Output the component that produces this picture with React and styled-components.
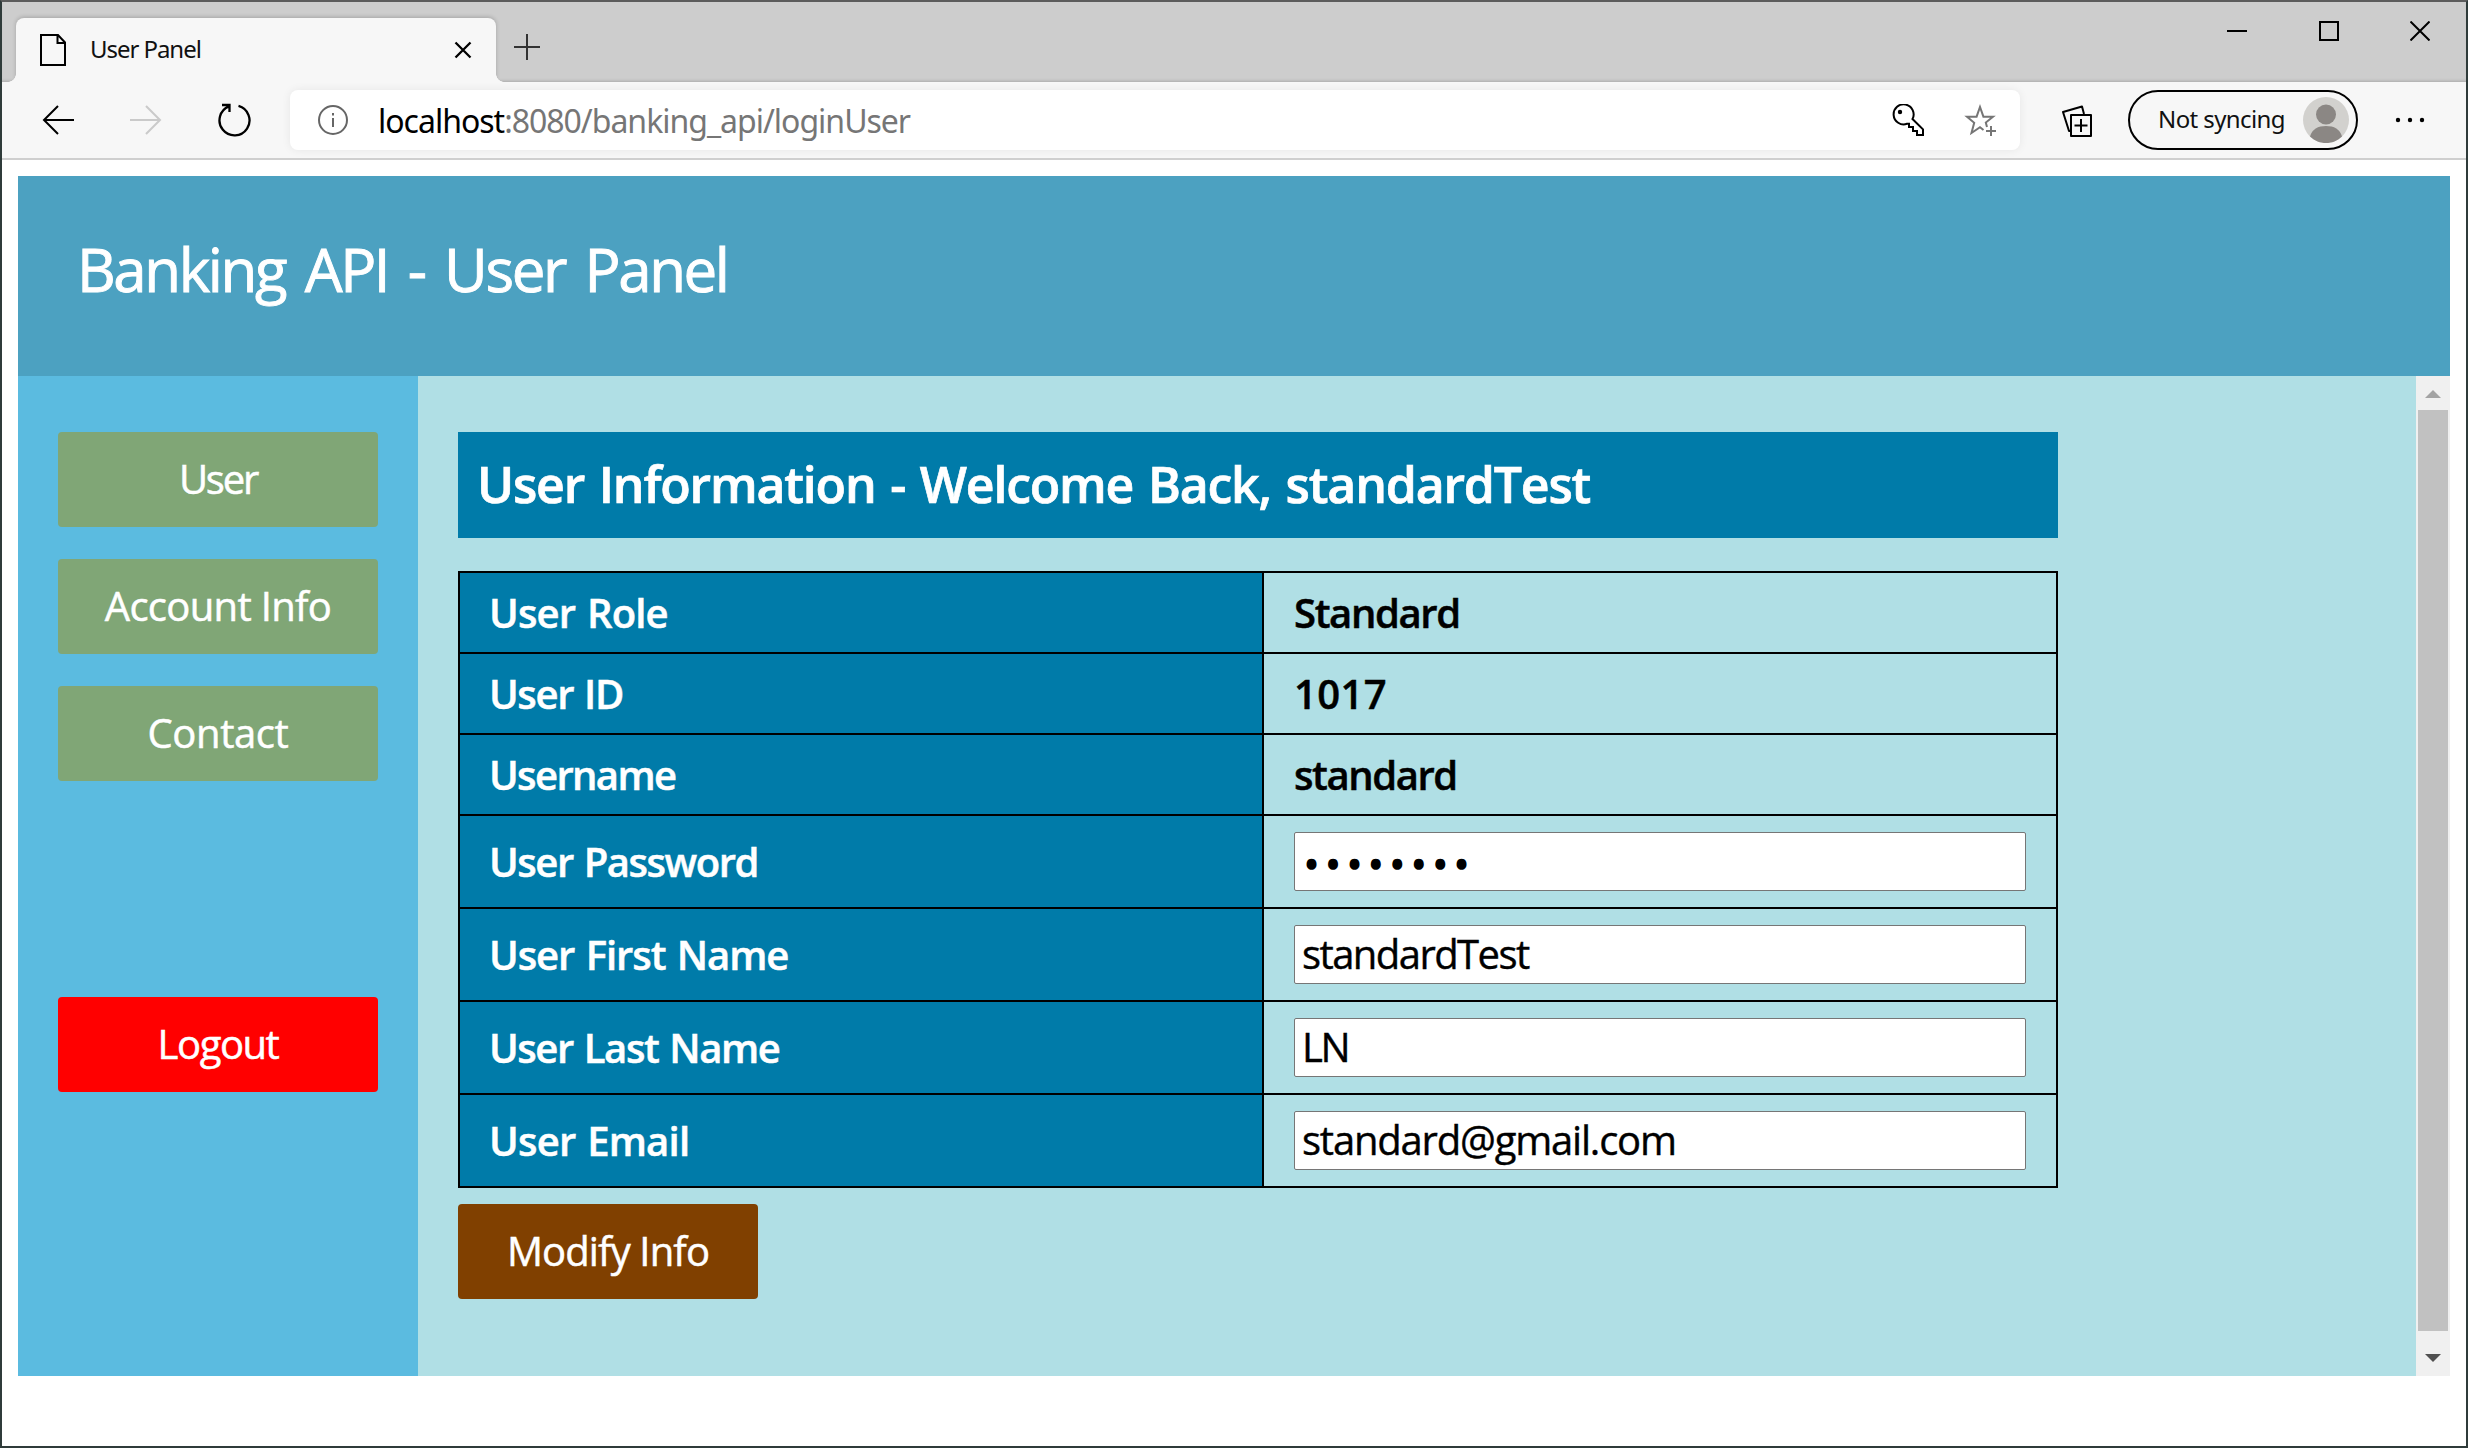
import React from 'react';
import styled, { createGlobalStyle } from 'styled-components';

const uiFont = '"Noto Sans", "Open Sans", sans-serif';
const pageFont = '"Open Sans", "Noto Sans", sans-serif';

const GlobalStyle = createGlobalStyle`
  *, *::before, *::after { box-sizing: border-box; }
  body { margin: 0; background: #fff; }
`;

const Window = styled.div`
  display: flex;
  flex-direction: column;
  width: 2468px;
  height: 1448px;
  border: 2px solid #2f3b3a;
  border-top-color: #5c5c5c;
  background: #fff;
  font-family: ${uiFont};
  overflow: hidden;
`;

const TabStrip = styled.div`
  display: flex;
  align-items: flex-start;
  height: 80px;
  flex: none;
  padding: 16px 36px 0 14px;
  background: #cdcdcd;
  box-shadow: inset 0 -3px 3px -2px #aaa;
`;

const Tab = styled.div`
  position: relative;
  display: flex;
  align-items: center;
  width: 480px;
  height: 64px;
  padding: 0 24px;
  background: #f7f7f7;
  border-radius: 8px 8px 0 0;
  box-shadow: 0 -1px 4px rgba(0, 0, 0, 0.2);
  clip-path: inset(-6px -8px 0 -14px);

  &::before, &::after {
    content: '';
    position: absolute;
    bottom: 0;
    width: 8px;
    height: 8px;
  }
  &::before {
    left: -8px;
    background: radial-gradient(circle at 0 0, transparent 7.5px, #f7f7f7 8px);
  }
  &::after {
    right: -8px;
    background: radial-gradient(circle at 100% 0, transparent 7.5px, #f7f7f7 8px);
  }
`;

const TabTitle = styled.span`
  flex: 1;
  margin-left: 24px;
  padding-bottom: 2px;
  color: #111;
  font-size: 24px;
  line-height: 32px;
  letter-spacing: -1.05px;
`;

const Icon = styled.svg`
  display: block;
  flex: none;
  fill: none;
  stroke: ${(p) => p.$color || '#000'};
  stroke-width: ${(p) => p.$stroke || 2};
`;

const NewTab = styled.div`
  margin: 16px 0 0 18px;
`;

const WindowControls = styled.div`
  display: flex;
  gap: 71.5px;
  margin: 3px 0 0 auto;
`;

const Toolbar = styled.div`
  display: flex;
  align-items: center;
  height: 78px;
  flex: none;
  padding: 0 40px 0 40px;
  background: #f7f7f7;
  border-bottom: 2px solid #cfcfcf;
`;

const NavButtons = styled.div`
  display: flex;
  align-items: center;
  width: 248px;
  gap: 56px;
`;

const AddressBar = styled.div`
  display: flex;
  align-items: center;
  width: 1730px;
  height: 60px;
  padding: 0 24px 0 28px;
  background: #fff;
  border-radius: 8px;
  box-shadow: 0 0 10px rgba(0, 0, 0, 0.07);
`;

const Url = styled.span`
  flex: 1;
  margin-left: 30px;
  padding-top: 1px;
  color: #767676;
  font-size: 32px;
  line-height: 44px;
  letter-spacing: -1.01px;
`;

const UrlHost = styled.span`
  color: #000;
`;

const AddressActions = styled.div`
  display: flex;
  gap: 40px;
`;

const Collections = styled.div`
  margin: 2px 36px 0 42px;
`;

const Profile = styled.div`
  display: flex;
  align-items: center;
  justify-content: space-between;
  width: 230px;
  height: 60px;
  padding: 0 7px 0 28px;
  border: 2px solid #000;
  border-radius: 30px;
`;

const ProfileLabel = styled.span`
  padding-bottom: 3px;
  color: #111;
  font-size: 24px;
  line-height: 32px;
  letter-spacing: -0.6px;
  white-space: nowrap;
`;

const More = styled.div`
  margin-left: 36px;
`;

const Page = styled.div`
  width: 2432px;
  margin: 16px 0 0 16px;
  font-family: ${pageFont};
`;

const Banner = styled.header`
  height: 200px;
  padding: 53px 59px 0;
  background: #4ca1c1;
  color: #fff;
`;

const BannerTitle = styled.h1`
  margin: 0;
  font-size: 60px;
  font-weight: 400;
  line-height: 81px;
  letter-spacing: -2.4px;
  word-spacing: 6.3px;
  -webkit-text-stroke: 0.9px currentColor;
`;

const Body = styled.div`
  display: flex;
  height: 1000px;
`;

const Sidebar = styled.nav`
  display: flex;
  flex-direction: column;
  gap: 32px;
  width: 400px;
  padding: 56px 40px 0;
  background: #5bbbe0;
`;

const Button = styled.button`
  width: ${(p) => p.$width || 320}px;
  height: 95px;
  margin: ${(p) => p.$top || 0}px 0 0;
  padding: 0 0 2px;
  border: 0;
  border-radius: 4px;
  background: ${(p) => p.$bg || '#80a676'};
  color: #fff;
  font-family: inherit;
  font-size: 40px;
  letter-spacing: ${(p) => p.$track || 0}px;
  -webkit-text-stroke: 0.5px currentColor;
`;

const Main = styled.main`
  flex: 1;
  padding: 56px 40px 0;
  background: #b0dfe5;
`;

const Heading = styled.h2`
  width: 1600px;
  height: 106px;
  margin: 0 0 33px;
  padding: 1px 0 0 19px;
  background: #007ba9;
  color: #fff;
  font-size: 50px;
  font-weight: 600;
  line-height: 103px;
  letter-spacing: -1.2px;
  word-spacing: 2.9px;
  white-space: nowrap;
  -webkit-text-stroke: 0.7px currentColor;
`;

const InfoTable = styled.div`
  display: grid;
  grid-template-columns: 802px 792px;
  grid-template-rows: repeat(3, 79px) repeat(4, 91px);
  gap: 2px;
  width: 1600px;
  margin-bottom: 16px;
  border: 2px solid #000;
  background: #000;
`;

const Cell = styled.div`
  display: flex;
  align-items: center;
  padding: 0 30px 1px;
  background: #b0dfe5;
  color: #000;
  font-size: 40px;
  font-weight: 600;
  letter-spacing: ${(p) => p.$track || 0}px;
  word-spacing: 2px;
  -webkit-text-stroke: 0.5px currentColor;
`;

const LabelCell = styled(Cell)`
  padding-left: 29px;
  background: #007ba9;
  color: #fff;
`;

const FieldCell = styled(Cell)`
  padding: 0 30px;
`;

const Field = styled.input`
  width: 732px;
  height: 59px;
  padding: ${(p) => (p.type === 'password' ? '4px 6px 0 9px' : '0 6px 2px 7px')};
  border: 1px solid #767676;
  border-radius: 2px;
  background: #fff;
  color: #000;
  font-family: ${pageFont};
  font-size: 40px;
  letter-spacing: ${(p) => p.$track || 0}px;
  -webkit-text-stroke: ${(p) => (p.type === 'password' ? 1.6 : 0.4)}px currentColor;
`;

const ScrollBar = styled.div`
  display: flex;
  flex-direction: column;
  align-items: center;
  justify-content: space-between;
  width: 34px;
  padding: 14px 0;
  background: #f0f0f0;
`;

const Thumb = styled.div`
  width: 30px;
  height: 921px;
  margin-top: -11px;
  background: #c1c1c1;
`;

const Arrow = styled.div`
  width: 16px;
  height: 8px;
  background: ${(p) => (p.$down ? '#505050' : '#a3a3a3')};
  clip-path: ${(p) => (p.$down ? 'polygon(0 0, 100% 0, 50% 100%)' : 'polygon(50% 0, 100% 100%, 0 100%)')};
`;

const ROWS = [
  { label: 'User Role', track: -0.8, value: 'Standard', valueTrack: -1.36 },
  { label: 'User ID', track: -1.36, value: '1017', valueTrack: 0.4 },
  { label: 'Username', track: -1.61, value: 'standard', valueTrack: -1.43 },
  { label: 'User Password', track: -1.45, value: 'password', valueTrack: 6.4, type: 'password' },
  { label: 'User First Name', track: -1.05, value: 'standardTest', valueTrack: -1.56, type: 'text' },
  { label: 'User Last Name', track: -1.42, value: 'LN', valueTrack: -2.5, type: 'text' },
  { label: 'User Email', track: -0.75, value: 'standard@gmail.com', valueTrack: -1.2, type: 'text' },
];

export default function App() {
  return (
    <Window>
      <GlobalStyle />
      <TabStrip>
        <Tab>
          <Icon width="26" height="32" viewBox="0 0 26 32">
            <path d="M1 1H18L25 8.5V31H1ZM17.5 1V9H25" />
          </Icon>
          <TabTitle>User Panel</TabTitle>
          <Icon width="18" height="18" viewBox="0 0 18 18" $stroke={2.3}>
            <path d="M1.5 1.5L16.5 16.5M16.5 1.5L1.5 16.5" />
          </Icon>
        </Tab>
        <NewTab>
          <Icon width="26" height="26" viewBox="0 0 26 26" $color="#333">
            <path d="M13 0V26M0 13H26" />
          </Icon>
        </NewTab>
        <WindowControls>
          <Icon width="20" height="20" viewBox="0 0 20 20">
            <path d="M0 10H20" />
          </Icon>
          <Icon width="20" height="20" viewBox="0 0 20 20">
            <path d="M1 1H19V19H1Z" />
          </Icon>
          <Icon width="20" height="20" viewBox="0 0 20 20">
            <path d="M0.5 0.5L19.5 19.5M19.5 0.5L0.5 19.5" />
          </Icon>
        </WindowControls>
      </TabStrip>

      <Toolbar>
        <NavButtons>
          <Icon width="32" height="30" viewBox="0 0 32 30">
            <path d="M32 15H2M16 1L2 15L16 29" />
          </Icon>
          <Icon width="32" height="30" viewBox="0 0 32 30" $color="#cacaca">
            <path d="M0 15H30M16 1L30 15L16 29" />
          </Icon>
          <Icon width="34" height="34" viewBox="0 0 34 34" $stroke={2.3}>
            <path d="M20.500 2.900A15 15 0 1 1 11 3.400M4 2H11.500V9" />
          </Icon>
        </NavButtons>
        <AddressBar>
          <Icon width="30" height="30" viewBox="0 0 30 30" $color="#666">
            <circle cx="15" cy="15" r="14" />
            <path d="M15 13V22M15 8V10.500" />
          </Icon>
          <Url>
            <UrlHost>localhost</UrlHost>:8080/banking_api/loginUser
          </Url>
          <AddressActions>
            <Icon width="32" height="32" viewBox="0 0 32 32">
              <path d="M20.500 15A10 10 0 1 0 15 19.800H17V23H21V27H25V31H31V25.300Z" />
              <circle cx="8" cy="8" r="1.200" fill="#000" />
            </Icon>
            <Icon width="32" height="32" viewBox="0 0 32 32" $color="#767676">
              <path d="M23 23L21.800 18.500L29 12.700H19.400L16 3L12.600 12.700H3L10.200 18.800L7.500 29L16 23.200L19.500 26M27 22V32M22 27H32" />
            </Icon>
          </AddressActions>
        </AddressBar>
        <Collections>
          <Icon width="30" height="32" viewBox="0 0 30 32">
            <path d="M8.500 26L7 26L1 7L20 1.500L22 9M9 10H29V31H9ZM19 14V27M12.500 20.500H25.500" strokeLinejoin="round" />
          </Icon>
        </Collections>
        <Profile>
          <ProfileLabel>Not syncing</ProfileLabel>
          <Icon width="46" height="46" viewBox="0 0 46 46" $color="none">
            <circle cx="23" cy="23" r="23" fill="#d2d1ce" />
            <circle cx="23" cy="17.500" r="10" fill="#8b8784" />
            <path d="M7 39.500C9 32 15 29 23 29S37 32 39 39.500C34 44 29 46 23 46S12 44 7 39.500Z" fill="#8b8784" />
          </Icon>
        </Profile>
        <More>
          <Icon width="32" height="6" viewBox="0 0 32 6" $color="none">
            <g fill="#000">
              <circle cx="4" cy="3" r="2.200" />
              <circle cx="16" cy="3" r="2.200" />
              <circle cx="28" cy="3" r="2.200" />
            </g>
          </Icon>
        </More>
      </Toolbar>

      <Page>
        <Banner>
          <BannerTitle>Banking API - User Panel</BannerTitle>
        </Banner>
        <Body>
          <Sidebar>
            <Button $track={-2.2}>User</Button>
            <Button $track={-0.68}>Account Info</Button>
            <Button $track={-0.4}>Contact</Button>
            <Button $track={-1.46} $bg="#ff0000" $top={184}>Logout</Button>
          </Sidebar>
          <Main>
            <Heading>User Information - Welcome Back, standardTest</Heading>
            <InfoTable>
              {ROWS.map((row) => (
                <React.Fragment key={row.label}>
                  <LabelCell $track={row.track}>{row.label}</LabelCell>
                  {row.type ? (
                    <FieldCell>
                      <Field type={row.type} defaultValue={row.value} $track={row.valueTrack} />
                    </FieldCell>
                  ) : (
                    <Cell $track={row.valueTrack}>{row.value}</Cell>
                  )}
                </React.Fragment>
              ))}
            </InfoTable>
            <Button $width={300} $bg="#804000" $track={-0.87}>Modify Info</Button>
          </Main>
          <ScrollBar>
            <Arrow />
            <Thumb />
            <Arrow $down />
          </ScrollBar>
        </Body>
      </Page>
    </Window>
  );
}
